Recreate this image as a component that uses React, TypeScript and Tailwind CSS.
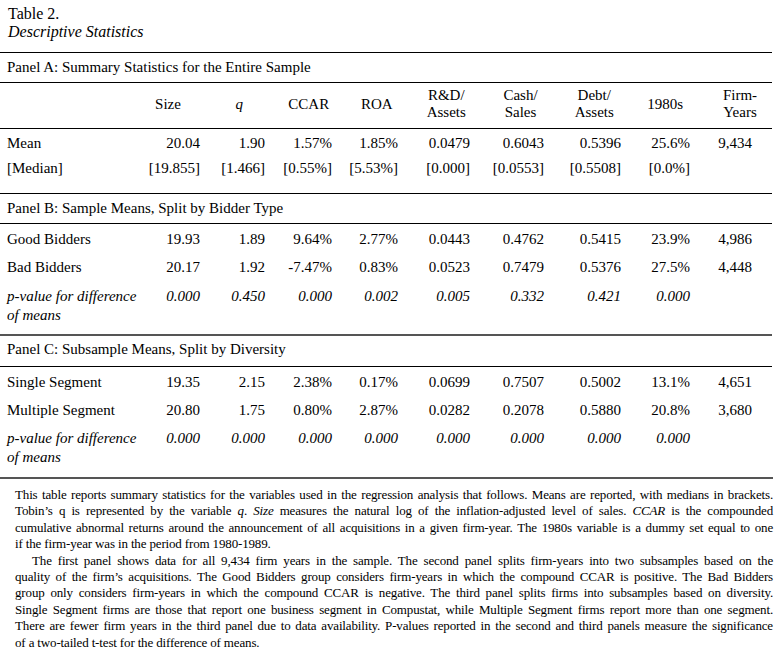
import React from "react";

const ROW = "grid grid-cols-[140px_60px_65px_67px_66px_72px_74px_77px_69px_62px]";
const HEAD = "grid grid-cols-[132px_72px_70.5px_68.5px_67.5px_71.5px_77px_70.5px_71.5px_78px]";

type RowProps = { label: React.ReactNode; vals: string[]; cls: string; italic?: boolean };

function DataRow({ label, vals, cls, italic }: RowProps) {
  return (
    <div className={`${ROW} ${cls} ${italic ? "italic" : ""}`}>
      <div className="pl-[7px] whitespace-nowrap">{label}</div>
      {vals.map((v, i) => (
        <div key={i} className="text-right whitespace-nowrap">
          {v}
        </div>
      ))}
    </div>
  );
}

function Line({ children, last, indent }: { children: React.ReactNode; last?: boolean; indent?: boolean }) {
  return (
    <div
      className={`whitespace-nowrap ${last ? "" : "[text-align-last:justify]"} ${indent ? "pl-[17px]" : ""}`}
    >
      {children}
    </div>
  );
}

export default function App() {
  const pv = "p-value for difference";
  return (
    <div className="min-h-[659px] w-[780px] bg-white text-black font-['Liberation_Serif','Times_New_Roman',serif]">
      <div className="w-[772px] pt-[5px]">
        {/* Title */}
        <div className="pl-[8px] text-[16px] leading-[18px]">
          <div>Table 2.</div>
          <div className="italic">Descriptive Statistics</div>
        </div>

        {/* Panel A title */}
        <div className="mt-[11px] border-t border-black py-[5px] pl-[7px] text-[15px] leading-[19px]">
          Panel A: Summary Statistics for the Entire Sample
        </div>

        {/* Header */}
        <div className={`${HEAD} items-center border-t border-black pt-[4px] pb-[7px] text-center text-[15px] leading-[17px]`}>
          <div />
          <div>Size</div>
          <div className="italic">q</div>
          <div>CCAR</div>
          <div>ROA</div>
          <div>
            R&amp;D/
            <br />
            Assets
          </div>
          <div>
            Cash/
            <br />
            Sales
          </div>
          <div>
            Debt/
            <br />
            Assets
          </div>
          <div>1980s</div>
          <div>
            Firm-
            <br />
            Years
          </div>
        </div>

        {/* Panel A rows */}
        <div className="border-t border-black pt-[2px] pb-[12px] text-[15px]">
          <DataRow
            cls="leading-[25px]"
            label="Mean"
            vals={["20.04", "1.90", "1.57%", "1.85%", "0.0479", "0.6043", "0.5396", "25.6%", "9,434"]}
          />
          <DataRow
            cls="leading-[25px]"
            label="[Median]"
            vals={["[19.855]", "[1.466]", "[0.55%]", "[5.53%]", "[0.000]", "[0.0553]", "[0.5508]", "[0.0%]", ""]}
          />
        </div>

        {/* Panel B title */}
        <div className="border-t border-black py-[5px] pl-[7px] text-[15px] leading-[19px]">
          Panel B: Sample Means, Split by Bidder Type
        </div>

        <div className="border-t border-black pt-[1px] pb-[9px] text-[15px]">
          <DataRow
            cls="leading-[28px]"
            label="Good Bidders"
            vals={["19.93", "1.89", "9.64%", "2.77%", "0.0443", "0.4762", "0.5415", "23.9%", "4,986"]}
          />
          <DataRow
            cls="leading-[28px]"
            label="Bad Bidders"
            vals={["20.17", "1.92", "-7.47%", "0.83%", "0.0523", "0.7479", "0.5376", "27.5%", "4,448"]}
          />
          <DataRow
            cls="mt-[6px] leading-[19px] items-start"
            italic
            label={
              <>
                {pv}
                <br />
                of means
              </>
            }
            vals={["0.000", "0.450", "0.000", "0.002", "0.005", "0.332", "0.421", "0.000", ""]}
          />
        </div>

        {/* Panel C title */}
        <div className="border-t-2 border-[#555555] pt-[4px] pb-[7px] pl-[7px] text-[15px] leading-[19px]">
          Panel C: Subsample Means, Split by Diversity
        </div>

        <div className="border-t border-black pt-[1px] pb-[10px] text-[15px]">
          <DataRow
            cls="leading-[28px]"
            label="Single Segment"
            vals={["19.35", "2.15", "2.38%", "0.17%", "0.0699", "0.7507", "0.5002", "13.1%", "4,651"]}
          />
          <DataRow
            cls="leading-[28px]"
            label="Multiple Segment"
            vals={["20.80", "1.75", "0.80%", "2.87%", "0.0282", "0.2078", "0.5880", "20.8%", "3,680"]}
          />
          <DataRow
            cls="mt-[5px] leading-[19px] items-start"
            italic
            label={
              <>
                {pv}
                <br />
                of means
              </>
            }
            vals={["0.000", "0.000", "0.000", "0.000", "0.000", "0.000", "0.000", "0.000", ""]}
          />
        </div>

        {/* Notes */}
        <div className="w-[773px] border-t-2 border-[#555555] pt-[8px] pl-[15px] text-[13px] leading-[16.4px] tracking-[-0.15px]">
          <Line>
            This table reports summary statistics for the variables used in the regression analysis that follows. Means are reported, with medians in brackets.
          </Line>
          <Line>
            Tobin’s q is represented by the variable <i>q</i>. <i>Size</i> measures the natural log of the inflation-adjusted level of sales. <i>CCAR</i> is the compounded
          </Line>
          <Line>
            cumulative abnormal returns around the announcement of all acquisitions in a given firm-year. The 1980s variable is a dummy set equal to one
          </Line>
          <Line last>if the firm-year was in the period from 1980-1989.</Line>
          <Line indent>
            The first panel shows data for all 9,434 firm years in the sample. The second panel splits firm-years into two subsamples based on the
          </Line>
          <Line>
            quality of the firm’s acquisitions. The Good Bidders group considers firm-years in which the compound CCAR is positive. The Bad Bidders
          </Line>
          <Line>
            group only considers firm-years in which the compound CCAR is negative. The third panel splits firms into subsamples based on diversity.
          </Line>
          <Line>
            Single Segment firms are those that report one business segment in Compustat, while Multiple Segment firms report more than one segment.
          </Line>
          <Line>
            There are fewer firm years in the third panel due to data availability. P-values reported in the second and third panels measure the significance
          </Line>
          <Line last>of a two-tailed t-test for the difference of means.</Line>
        </div>
      </div>
    </div>
  );
}
